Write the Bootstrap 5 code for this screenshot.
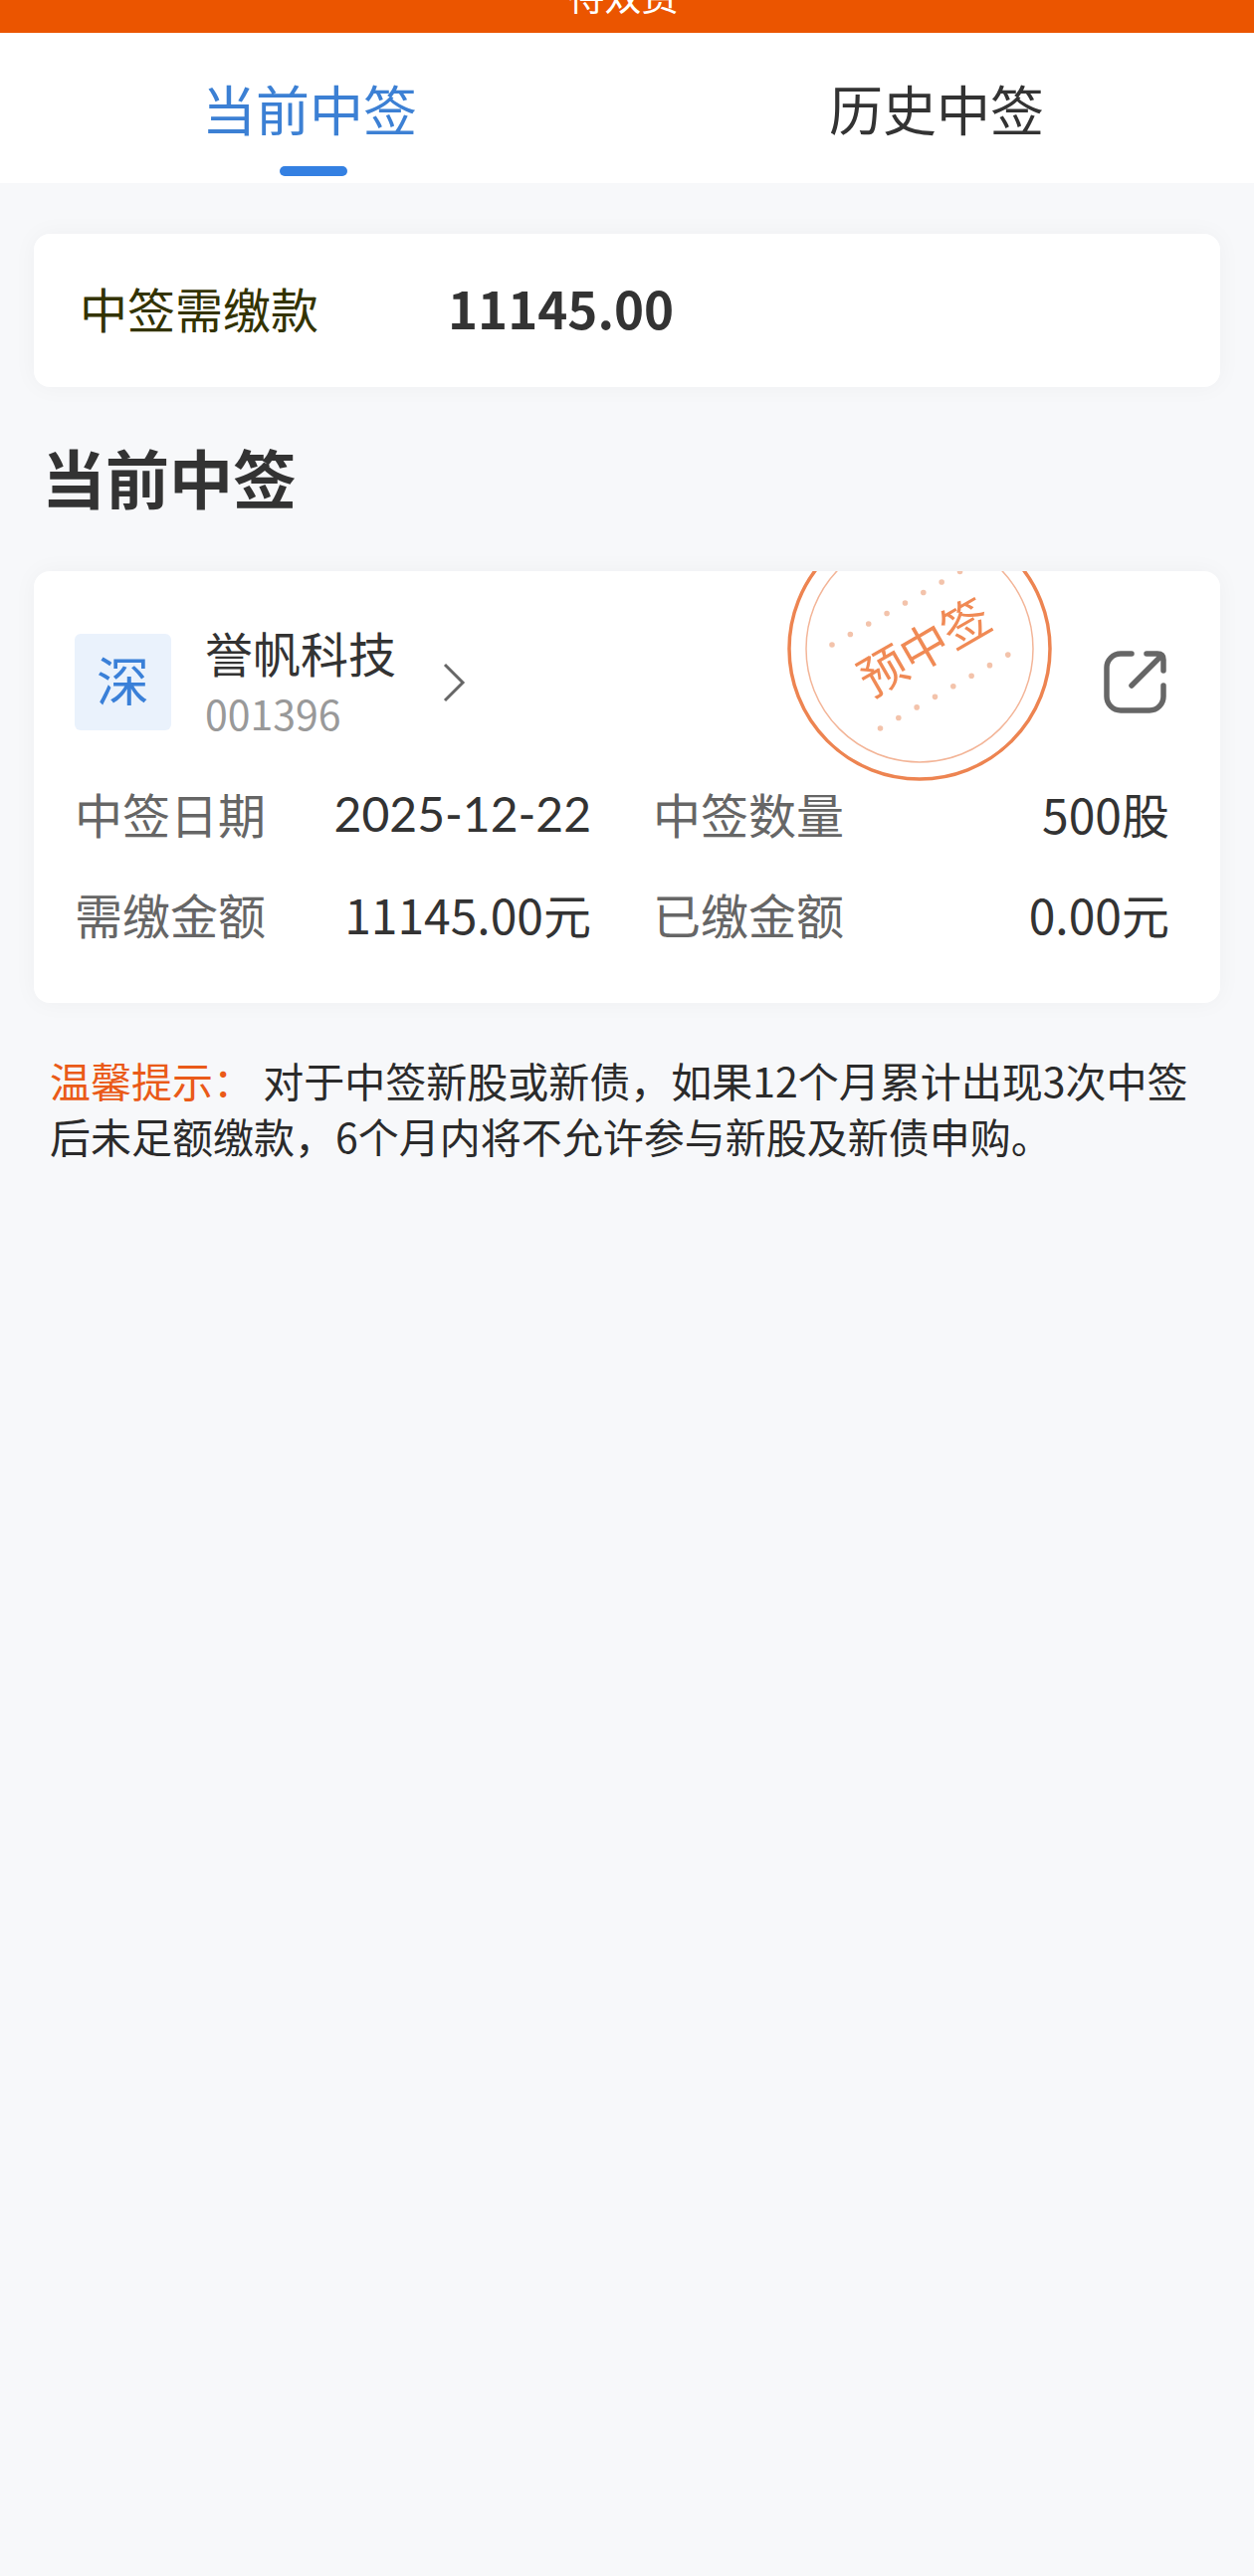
<!DOCTYPE html>
<html lang="zh-CN">
<head>
<meta charset="utf-8">
<meta name="viewport" content="width=device-width, initial-scale=1">
<title>当前中签</title>
<link rel="stylesheet" href="https://cdn.jsdelivr.net/npm/bootstrap@5.3.0/dist/css/bootstrap.min.css">
<style>
  body { font-family: "Noto Sans CJK SC", sans-serif; background: #f7f8fa; color: #333; min-height: 100vh; }
  .app-bar { height: 33px; padding: 0 8px 20px 0; background: #eb5500; color: #fff; font-size: 37px; line-height: 36px; }
  .tab-bar .nav-link { height: 151px; padding: 0 8px 0 0; border-radius: 0; font-size: 54px; line-height: 151px; color: #333; position: relative; }
  .tab-bar .nav-link.active { background: transparent; color: #3c80d4; }
  .tab-bar .nav-link.active::after { content: ""; position: absolute; left: 50%; bottom: 7px; width: 68px; height: 10px; margin-left: -34px; border-radius: 5px; background: #3480e2; }
  .page-body { padding: 51px 34px 0; }
  .panel { background: #fff; border: 0; border-radius: 16px; box-shadow: 0 0 24px rgba(0, 0, 0, .04); }
  .due-panel { height: 154px; padding: 0 46px 6px; }
  .due-label { font-size: 48px; color: #333300; width: 370px; }
  .due-value { font-size: 51px; font-weight: 700; }
  .section-title { font-size: 64px; font-weight: 700; line-height: 92px; margin: 43px 8px 50px; }
  .lot-panel { padding: 48px 51px 39px 41px; overflow: hidden; }
  .market { width: 97px; height: 97px; margin-top: 15px; border-radius: 6px; background: #eaf2fc; color: #3a80d8; font-size: 53px; line-height: 91px; }
  .stock { margin-left: 34px; color: inherit; }
  .stock-name { font-size: 48px; line-height: 66px; }
  .stock-code { font-size: 41px; line-height: 56px; color: #999; }
  .chevron { margin-left: 47px; margin-top: 5px; }
  .stamp { position: absolute; top: -56px; right: 168px; }
  .stamp text { font-size: 48px; }
  .share { margin: 32px 3px 0 0; }
  .facts { margin: 23px 0 0; column-gap: 62px; }
  .fact { font-size: 48px; line-height: 101px; }
  .fact dt { font-weight: 400; color: #666; }
  .fact-date { font-family: Lato, "Noto Sans CJK SC", sans-serif; }
  .tip { font-size: 41px; line-height: 56px; margin: 49px 16px 0; color: #2b2b2b; }
  .tip b { font-weight: 400; color: #ea5a18; }
</style>
<script src="https://cdn.jsdelivr.net/npm/bootstrap@5.3.0/dist/js/bootstrap.bundle.min.js"></script>
</head>
<body>
<header class="app-bar d-flex justify-content-center align-items-end overflow-hidden">
  <span>待双费</span>
</header>
<nav class="tab-bar nav nav-pills nav-fill flex-nowrap bg-white" aria-label="中签">
  <a class="nav-link active" href="#current" aria-current="page">当前中签</a>
  <a class="nav-link" href="#history">历史中签</a>
</nav>
<main class="page-body">
  <section class="panel due-panel d-flex align-items-center">
    <span class="due-label">中签需缴款</span>
    <span class="due-value">11145.00</span>
  </section>
  <h1 class="section-title">当前中签</h1>
  <section class="panel lot-panel position-relative">
    <div class="d-flex align-items-start">
      <span class="market text-center">深</span>
      <a class="stock d-flex align-items-center text-decoration-none" href="#stock">
        <span class="d-flex flex-column">
          <span class="stock-name">誉帆科技</span>
          <span class="stock-code">001396</span>
        </span>
        <svg class="chevron" width="24" height="40" viewBox="0 0 24 40" fill="none" stroke="#666" stroke-width="3" aria-hidden="true"><path d="M2 2 20 20 2 38"/></svg>
      </a>
      <button class="share btn p-0 border-0 ms-auto lh-1" type="button" aria-label="分享">
        <svg class="d-block" width="63" height="63" viewBox="0 0 63 63" fill="none" stroke="#666" stroke-width="5.500" stroke-linecap="round" stroke-linejoin="round"><path d="M28 3H17A14 14 0 0 0 3 17V46A14 14 0 0 0 17 60H46A14 14 0 0 0 60 46V35"/><path d="M43 3H54Q60 3 60 9V20M58 5 28 35"/></svg>
      </button>
    </div>
    <svg class="stamp" width="268" height="268" viewBox="0 0 268 268" role="img" aria-label="预中签">
      <circle cx="134" cy="134" r="131" fill="none" stroke="#ed8451" stroke-width="3.500"/>
      <circle cx="134" cy="134" r="114" fill="none" stroke="#f3b598" stroke-width="1.500"/>
      <g fill="none" stroke="#f3c3ab" stroke-width="5.600" stroke-linecap="round">
        <path d="M46 130 174.600 56.500" stroke-dasharray="0 21.150"/>
        <path d="M94.500 214 223 140" stroke-dasharray="0 21.150"/>
      </g>
      <text transform="translate(139 133) rotate(-30)" text-anchor="middle" y="17" fill="#f08a55">预中签</text>
    </svg>
    <dl class="facts row row-cols-2 gx-0 flex-nowrap">
      <div class="col flex-shrink-1">
        <div class="fact d-flex justify-content-between"><dt>中签日期</dt><dd class="fact-date m-0">2025-12-22</dd></div>
        <div class="fact d-flex justify-content-between"><dt>需缴金额</dt><dd class="m-0">11145.00元</dd></div>
      </div>
      <div class="col flex-shrink-1">
        <div class="fact d-flex justify-content-between"><dt>中签数量</dt><dd class="m-0">500股</dd></div>
        <div class="fact d-flex justify-content-between"><dt>已缴金额</dt><dd class="m-0">0.00元</dd></div>
      </div>
    </dl>
  </section>
  <p class="tip"><b>温馨提示：</b> 对于中签新股或新债，如果12个月累计出现3次中签后未足额缴款，6个月内将不允许参与新股及新债申购。</p>
</main>
</body>
</html>
